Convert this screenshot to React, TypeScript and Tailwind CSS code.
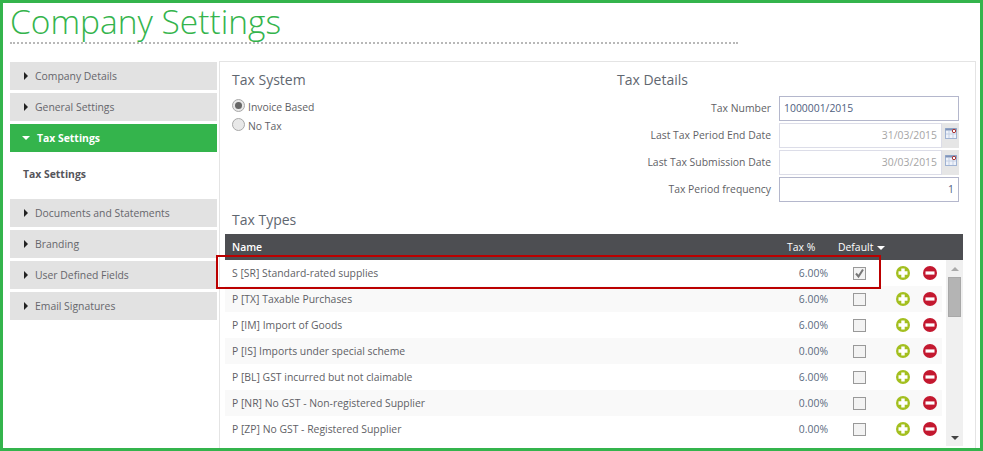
import React from 'react'

const font = { fontFamily: '"Open Sans", "Noto Sans", sans-serif' }

const rows = [
  { name: 'S [SR] Standard-rated supplies', pct: '6.00%', checked: true },
  { name: 'P [TX] Taxable Purchases', pct: '6.00%' },
  { name: 'P [IM] Import of Goods', pct: '6.00%' },
  { name: 'P [IS] Imports under special scheme', pct: '0.00%' },
  { name: 'P [BL] GST incurred but not claimable', pct: '6.00%' },
  { name: 'P [NR] No GST - Non-registered Supplier', pct: '0.00%' },
  { name: 'P [ZP] No GST - Registered Supplier', pct: '0.00%' },
]

function SideItem({ label }: { label: string }) {
  return (
    <div className="flex h-7 items-center bg-[#e2e2e2] pl-[14px] text-[#66666c]">
      <span className="mr-[7px] h-0 w-0 border-y-[4px] border-l-[4px] border-y-transparent border-l-[#222]" />
      <span className="pt-[2px]">{label}</span>
    </div>
  )
}

function PlusIcon() {
  return (
    <svg width="14" height="14" viewBox="0 0 14 14" className="block">
      <circle cx="7" cy="7" r="7" fill="#a3bf1f" />
      <path d="M7 2.5v9M2.5 7h9" stroke="#fff" strokeWidth="3.4" />
    </svg>
  )
}

function MinusIcon() {
  return (
    <svg width="14" height="14" viewBox="0 0 14 14" className="block">
      <circle cx="7" cy="7" r="7" fill="#c3182f" />
      <path d="M2.5 7h9" stroke="#fff" strokeWidth="3.2" />
    </svg>
  )
}

function CalendarIcon() {
  return (
    <svg width="12" height="12" viewBox="0 0 12 12">
      <rect x="0.5" y="1.5" width="11" height="10" fill="#eef2fa" stroke="#9fb2d2" />
      <rect x="0.5" y="1.5" width="11" height="2" fill="#7f93b8" />
      <path d="M4 4v7M8 4v7M1 7h10" stroke="#c5d0e4" />
      <circle cx="9" cy="4" r="1.7" fill="#fff" stroke="#a33" />
    </svg>
  )
}

function FieldLabel({ children }: { children: React.ReactNode }) {
  return <span className="w-[154px] text-right text-[#5f5f66]">{children}</span>
}

function TextField({ value, right }: { value: string; right?: boolean }) {
  return (
    <div
      className={`ml-[8px] flex h-[25px] w-[180px] items-center border border-[#b4b7cc] bg-white px-[4px] text-[#4f6080] ${right ? 'justify-end' : ''}`}
    >
      {value}
    </div>
  )
}

function DateField({ value }: { value: string }) {
  return (
    <div className="ml-[8px] flex h-[25px] w-[180px] bg-[#e6e6e6]">
      <div className="flex w-[163px] items-center justify-end border border-[#dcdde8] bg-white px-[4px] text-[#a5a5a5]">
        {value}
      </div>
      <div className="flex flex-1 justify-center pt-[4px]">
        <CalendarIcon />
      </div>
    </div>
  )
}

function Radio({ label, on }: { label: string; on?: boolean }) {
  return (
    <div className="flex h-[19px] items-center text-[#5f5f66]">
      <span className="mr-[3px] flex h-[13px] w-[13px] items-center justify-center rounded-full border border-[#a8a8a8] bg-[#e8e8e8]">
        {on && <span className="h-[7px] w-[7px] rounded-full bg-[#666]" />}
      </span>
      <span className="pt-[5px]">{label}</span>
    </div>
  )
}

export default function App() {
  return (
    <div
      className="h-[451px] w-[983px] overflow-hidden border-[3px] border-[#34b44c] bg-white pl-[7px] text-[10.4px]"
      style={font}
    >
      <h1 className="h-[39px] text-[33.5px] font-light leading-[36px] text-[#34b44c]">Company Settings</h1>
      <div className="w-[728px] border-t-2 border-dotted border-[#b8b8b8]" />

      <div className="mt-[17px] flex">
        {/* Left menu */}
        <div className="w-[207px] pt-px">
          <div className="flex flex-col gap-[3px]">
            <SideItem label="Company Details" />
            <SideItem label="General Settings" />
            <div className="flex h-7 items-center bg-[#34b44c] pl-[12px] font-bold text-white">
              <span className="mr-[7px] h-0 w-0 border-x-[4px] border-t-[4px] border-x-transparent border-t-white" />
              <span className="pt-[2px]">Tax Settings</span>
            </div>
          </div>
          <div className="flex h-[47px] items-center pb-[2px] pl-[13px] font-bold text-[#55555b]">Tax Settings</div>
          <div className="flex flex-col gap-[3px]">
            <SideItem label="Documents and Statements" />
            <SideItem label="Branding" />
            <SideItem label="User Defined Fields" />
            <SideItem label="Email Signatures" />
          </div>
        </div>

        {/* Main panel */}
        <div className="ml-[2px] h-[400px] w-[757px] border border-[#e4e4e4] pl-[5px] pr-[12px]">
          <div className="flex h-[172px]">
            <div className="w-[392px] pl-[7px] pt-[8px]">
              <h2 className="text-[14px] leading-[20px] text-[#5f6770]">Tax System</h2>
              <div className="mt-[6px]">
                <Radio label="Invoice Based" on />
                <Radio label="No Tax" />
              </div>
            </div>
            <div className="flex-1 pt-[8px]">
              <h2 className="text-[14px] leading-[20px] text-[#5f6770]">Tax Details</h2>
              <div className="mt-[6px] flex flex-col gap-[2px]">
                <div className="flex items-center">
                  <FieldLabel>Tax Number</FieldLabel>
                  <TextField value="1000001/2015" />
                </div>
                <div className="flex items-center">
                  <FieldLabel>Last Tax Period End Date</FieldLabel>
                  <DateField value="31/03/2015" />
                </div>
                <div className="flex items-center">
                  <FieldLabel>Last Tax Submission Date</FieldLabel>
                  <DateField value="30/03/2015" />
                </div>
                <div className="flex items-center">
                  <FieldLabel>Tax Period frequency</FieldLabel>
                  <TextField value="1" right />
                </div>
              </div>
            </div>
          </div>

          {/* Tax types table */}
          <h2 className="h-[0px] -translate-y-[24px] pl-[7px] text-[14px] leading-[20px] text-[#5f6770]">Tax Types</h2>
          <div className="flex h-[26px] items-center bg-[#4d4e52] pt-[2px] text-white">
            <span className="ml-[7px] flex-1 font-semibold">Name</span>
            <span className="w-[28px] whitespace-nowrap">Tax %</span>
            <span className="ml-[23px] w-[35px] whitespace-nowrap">Default</span>
            <span className="ml-[4px] mr-[78px] h-0 w-0 border-x-[4px] border-t-[4px] border-x-transparent border-t-white" />
          </div>
          <div className="relative flex">
            <div className="w-[717px]">
              {rows.map((r, i) => (
                <div key={r.name} className={`flex h-[26px] items-center text-[#5f5f66] ${i % 2 ? 'bg-[#f9f9f9]' : 'bg-white'}`}>
                  <span className="ml-[7px] flex-1 pt-[2px]">{r.name}</span>
                  <span className="w-[40px] pt-[2px] text-right text-[#5b6a80]">{r.pct}</span>
                  <span className="ml-[25px] flex h-[13px] w-[13px] items-center justify-center border border-[#999] bg-[#f3f3f3]">
                    {r.checked && (
                      <svg width="11" height="11" viewBox="0 0 11 11">
                        <path d="M2 5.5l2.5 3L9 1.5" fill="none" stroke="#777" strokeWidth="2" />
                      </svg>
                    )}
                  </span>
                  <span className="ml-[30px]"><PlusIcon /></span>
                  <span className="ml-[13px] mr-[5px]"><MinusIcon /></span>
                </div>
              ))}
            </div>
            {/* Scrollbar */}
            <div className="ml-[4px] flex h-[186px] w-[17px] flex-col items-center bg-[#f0f0f0] pt-[7px]">
              <span className="h-0 w-0 border-x-[4px] border-b-[4px] border-x-transparent border-b-[#aaa]" />
              <span className="mt-[6px] h-[40px] w-[13px] border border-[#a8a8a8] bg-[#b4b4b4]" />
              <span className="mt-auto mb-[6px] h-0 w-0 border-x-[4px] border-t-[4px] border-x-transparent border-t-[#444]" />
            </div>
            {/* Highlight around first row */}
            <div className="absolute left-[-9px] top-[-5px] h-[34px] w-[665px] border-2 border-[#bb0000]" />
          </div>
        </div>
      </div>
    </div>
  )
}
